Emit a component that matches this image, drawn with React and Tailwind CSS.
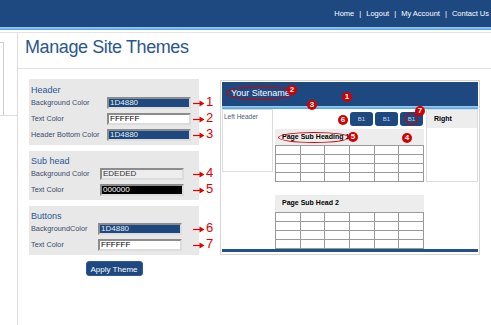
import React from 'react';

const rowsData = {
  header: [
    { label: 'Background Color', value: '1D4880', bg: 'bg-[#1D4880]', fg: 'text-[#e6ecf5]', num: '1' },
    { label: 'Text Color', value: 'FFFFFF', bg: 'bg-white', fg: 'text-black', num: '2' },
    { label: 'Header Bottom Color', value: '1D4880', bg: 'bg-[#1D4880]', fg: 'text-[#e6ecf5]', num: '3' },
  ],
  sub: [
    { label: 'Background Color', value: 'EDEDED', bg: 'bg-[#ededed]', fg: 'text-[#333]', num: '4' },
    { label: 'Text Color', value: '000000', bg: 'bg-black', fg: 'text-white', num: '5' },
  ],
  buttons: [
    { label: 'BackgroundColor', value: '1D4880', bg: 'bg-[#1D4880]', fg: 'text-[#e6ecf5]', num: '6' },
    { label: 'Text Color', value: 'FFFFFF', bg: 'bg-white', fg: 'text-black', num: '7' },
  ],
};

function Arrow() {
  return (
    <svg width="12" height="7" viewBox="0 0 12 7" className="absolute left-[162px] top-[3px]">
      <line x1="0" y1="3.5" x2="8" y2="3.5" stroke="#e00000" strokeWidth="1.2" />
      <polygon points="6.5,0.5 11.5,3.5 6.5,6.5" fill="#e00000" />
    </svg>
  );
}

function FieldRow({ row, labelW }) {
  return (
    <div className="relative flex items-center h-[12px]">
      <div className={`${labelW} shrink-0 text-[7.3px] text-[#3b4c6b] whitespace-nowrap`}>{row.label}</div>
      <div
        className={`w-[84px] h-[12px] shrink-0 border-2 border-t-[#8c8c8c] border-l-[#8c8c8c] border-r-[#dcdcdc] border-b-[#dcdcdc] ${row.bg} ${row.fg} text-[8px] leading-[8px] pl-[1px]`}
      >
        {row.value}
      </div>
      <Arrow />
      <span className="absolute left-[175px] top-[-3px] text-[13px] leading-[16px] text-[#e00000]">{row.num}</span>
    </div>
  );
}

function Section({ title, rows, labelW, pt }) {
  return (
    <div className={`w-[170px] bg-[#e8e8e8] px-[2px] ${pt} pb-[4px]`}>
      <div className="h-[14px] leading-[14px] text-[9px] text-[#2b5597]">{title}</div>
      <div className="flex flex-col gap-[4px]">
        {rows.map((r, i) => (
          <FieldRow key={i} row={r} labelW={labelW} />
        ))}
      </div>
    </div>
  );
}

function Grid() {
  return (
    <div className="grid grid-cols-6 border-l border-t border-[#999]">
      {Array.from({ length: 24 }).map((_, i) => (
        <div key={i} className="h-[9px] border-r border-b border-[#999] bg-white" />
      ))}
    </div>
  );
}

function Dot({ n, className }) {
  return (
    <div
      className={`absolute w-[10px] h-[10px] rounded-full bg-[#d10000] text-white text-[8px] font-bold leading-[10px] text-center ${className}`}
    >
      {n}
    </div>
  );
}

function Preview() {
  return (
    <div className="relative ml-[21px] mt-[1px] w-[260px] h-[175px] border border-[#d5d5d5] p-[1px] flex flex-col">
      <div className="h-[24px] bg-[#1D4880] flex items-center pl-[9px] text-white text-[9px]">Your Sitename</div>
      <div className="h-[3px] bg-gradient-to-b from-[#9fd3f3] to-[#4f9fdb]" />
      <div className="h-[140px] flex">
        <div className="w-[51px] h-[63px] border border-[#dcdcdc] px-[1px] pt-[3px] text-[6.5px] text-[#4b5b78] leading-[8px]">
          Left Header
        </div>
        <div className="ml-[2px] w-[149px]">
          <div className="pt-[3px] flex justify-end gap-[2px] pr-[1px]">
            {[0, 1, 2].map((i) => (
              <div
                key={i}
                className="w-[23px] h-[14px] rounded-[3px] bg-[#1D4880] text-[6px] text-[#c8d4e6] flex items-center justify-center"
              >
                B1
              </div>
            ))}
          </div>
          <div className="mt-[3px] h-[16px] bg-[#ededed] flex items-center pl-[7px] text-[7px] font-bold text-black">
            Page Sub Heading 1
          </div>
          <Grid />
          <div className="mt-[13px] h-[17px] bg-[#ededed] flex items-center pl-[7px] text-[7px] font-bold text-black">
            Page Sub Head 2
          </div>
          <Grid />
        </div>
        <div className="ml-[2px] w-[52px] h-[73px] border border-[#dcdcdc]">
          <div className="h-[18px] bg-[#ededed] flex items-center pl-[7px] text-[7px] font-bold text-black">Right</div>
        </div>
      </div>
      <div className="h-[3px] bg-[#24508a]" />

      {/* annotations */}
      <div className="absolute left-[5px] top-[5px] w-[68px] h-[14px] rounded-[50%] border border-[#d00000]" />
      <div className="absolute left-[184px] top-[32px] w-[13px] h-[12px] rounded-[50%] border border-[#d00000]" />
      <div className="absolute left-[57px] top-[51px] w-[72px] h-[11px] rounded-[50%] border border-[#d00000]" />
      <Dot n="2" className="left-[66px] top-[4px]" />
      <Dot n="1" className="left-[121px] top-[11px]" />
      <Dot n="3" className="left-[86px] top-[19px]" />
      <Dot n="6" className="left-[117px] top-[34px]" />
      <Dot n="7" className="left-[194px] top-[25px]" />
      <Dot n="5" className="left-[127px] top-[51px]" />
      <Dot n="4" className="left-[181px] top-[52px]" />
    </div>
  );
}

export default function App() {
  return (
    <div className="w-[491px] h-[325px] overflow-hidden bg-white flex flex-col font-['Liberation_Sans',Arial,sans-serif]">
      {/* Top bar */}
      <div className="h-[27px] shrink-0 bg-[#1D4880] flex items-center justify-end pr-[2px] text-white text-[7.5px]">
        <span>Home</span>
        <span className="mx-[5px]">|</span>
        <span>Logout</span>
        <span className="mx-[5px]">|</span>
        <span>My Account</span>
        <span className="mx-[5px]">|</span>
        <span>Contact Us</span>
      </div>
      <div className="h-[3px] shrink-0 bg-gradient-to-b from-[#9fd3f3] to-[#4f9fdb]" />
      <div className="h-[3px] shrink-0 border-b border-[#e4e4e4]" />

      <div className="flex flex-1">
        {/* Sidebar */}
        <div className="w-[18px] shrink-0 border-r border-[#dcdcdc]">
          <div className="border-b border-[#dcdcdc] pt-[9px]">
            <div className="w-[4px] h-[73px] border-t border-r border-[#cfcfcf]" />
          </div>
        </div>

        {/* Main */}
        <div className="flex-1 flex flex-col">
          <div className="h-[36px] border-b border-[#e2e2e2] pl-[7px] pt-[3px]">
            <h1 className="text-[18px] leading-[22px] tracking-[-0.4px] text-[#2b5690]">Manage Site Themes</h1>
          </div>

          <div className="flex pl-[11px] pt-[10px]">
            <div className="flex flex-col gap-[6px]">
              <Section title="Header" rows={rowsData.header} labelW="w-[76px]" pt="pt-[4px]" />
              <Section title="Sub head" rows={rowsData.sub} labelW="w-[69px]" pt="pt-[3px]" />
              <Section title="Buttons" rows={rowsData.buttons} labelW="w-[67px]" pt="pt-[3px]" />
              <div className="w-[170px] flex justify-center">
                <button className="w-[57px] h-[15px] rounded-[3px] bg-[#1D4880] text-white text-[8px] leading-[15px] border border-[#2d5a94]">
                  Apply Theme
                </button>
              </div>
            </div>
            <Preview />
          </div>
        </div>
      </div>
    </div>
  );
}
